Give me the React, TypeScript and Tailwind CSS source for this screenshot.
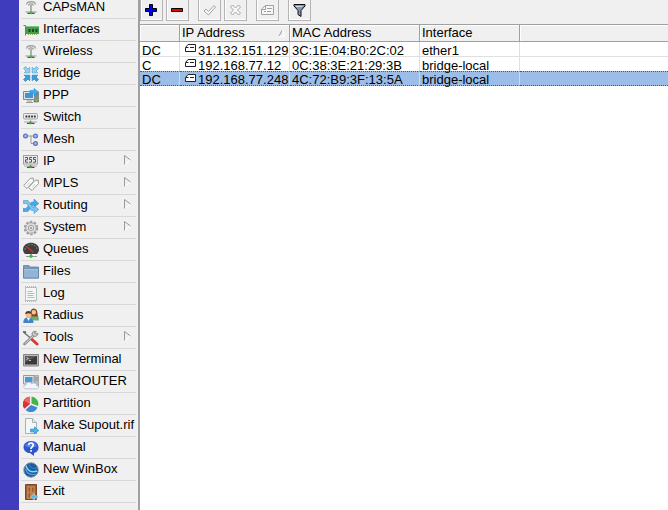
import React from "react";

type IconName =
  | "antenna" | "card" | "bridge" | "ppp" | "switch" | "mesh" | "ip" | "mpls" | "routing"
  | "gear" | "gauge" | "folder" | "log" | "users" | "tools" | "terminal" | "meta" | "pie"
  | "supout" | "help" | "winbox" | "door";

const glyphs: Record<IconName, React.ReactNode> = {
  antenna: (
    <g fill="none">
      <path d="M3.500 4.500C4 .8 12 .8 12.500 4.500" stroke="#a2a2a2" strokeWidth="1.300" />
      <path d="M5.500 5.500C6 3.200 10 3.200 10.500 5.500" stroke="#999" strokeWidth="1.200" />
      <path d="M8 5v7" stroke="#8a8a8a" strokeWidth="1.300" />
      <path d="M2.500 12h11" stroke="#b5b5b5" strokeWidth="1.500" />
      <path d="M4.500 13.300h7" stroke="#222" />
      <circle cx="8" cy="12.700" r="1.500" fill="#2fbe2f" />
    </g>
  ),
  card: (
    <g>
      <path d="M.5 3.500h2v10" stroke="#777" fill="none" />
      <path d="M3 4h13v8H3z" fill="#4a9b52" />
      <path d="M3 4.500h13" stroke="#7cc680" />
      <path d="M5.500 7h2v3h-2zM9 7h2v3H9zM12.500 7h2v3h-2z" fill="#1a4a22" />
      <path d="M5 12.500h9" stroke="#8fae5a" strokeDasharray="1 1" />
    </g>
  ),
  bridge: (
    <g strokeWidth=".6">
      <path d="M.5 2.500L2.500.5 5 3l1.800-1.800v5.600H1.200L3 5z" fill="#8fd2f4" stroke="#4e9bcb" />
      <path d="M15.500 2.500L13.500.5 11 3 9.200 1.200v5.600h5.600L13 5z" fill="#8fd2f4" stroke="#4e9bcb" />
      <path d="M.5 13.500l2 2L5 13l1.800 1.800V9.200H1.200L3 11z" fill="#35a0e2" stroke="#2273ad" />
      <path d="M15.500 13.500l-2 2L11 13l-1.800 1.800V9.200h5.600L13 11z" fill="#35a0e2" stroke="#2273ad" />
    </g>
  ),
  ppp: (
    <g>
      <path d="M11 4h4.500v10H11z" fill="#888" stroke="#666" strokeWidth=".6" />
      <path d="M.5 3.500h11v8H.5z" fill="#dfe3e6" stroke="#888" />
      <path d="M2 5h8v5H2z" fill="#3b96d6" />
      <path d="M4 13h5M3 14.500h7" stroke="#999" />
      <path d="M7 2.500h4V.5L15.500 4 11 7.500V5H7z" fill="#3aaef0" stroke="#1d7fc0" strokeWidth=".5" />
      <circle cx="13.500" cy="12" r="1" fill="#5de03c" />
    </g>
  ),
  switch: (
    <g>
      <rect x=".5" y="3.500" width="14" height="5.500" rx="1" fill="#ececec" stroke="#a5a5a5" />
      <path d="M2.500 6.500h10.500" stroke="#333" strokeWidth="1.800" strokeDasharray="1.800 1" />
      <path d="M7.500 9.500v3M1 12h13" stroke="#aaa" />
      <path d="M4 13.300h7.500" stroke="#222" />
      <circle cx="7.500" cy="12.700" r="1.500" fill="#2fae2f" />
    </g>
  ),
  mesh: (
    <g fill="none">
      <path d="M5 4h5M8 4v7.500h2.500" stroke="#999" />
      <g fill="#a9bdf5" stroke="#5470c8" strokeWidth="1.200">
        <circle cx="2.500" cy="4" r="1.900" />
        <circle cx="12.500" cy="4" r="1.900" />
        <circle cx="12.500" cy="11.500" r="1.900" />
      </g>
    </g>
  ),
  ip: (
    <g>
      <rect x=".5" y="1.500" width="14" height="8.500" fill="#e9e9e9" stroke="#a0a0a0" />
      <path d="M2 3.500h2.500v2.300H2.500v2.400H5M9 3.500H6.500v2h2v2.700H6M13 3.500h-2.500v2h2v2.700H10" fill="none" stroke="#555" />
      <path d="M7.500 10.500v2M1 12h13" stroke="#aaa" />
      <path d="M4 13.300h7.500" stroke="#222" />
      <circle cx="7.500" cy="12.700" r="1.500" fill="#2fae2f" />
    </g>
  ),
  mpls: (
    <g fill="#fafafa" stroke="#929292" strokeWidth=".9">
      <path d="M.8 9.500L7 2.500l3.200-.5.300 3.500L4 12.500z" />
      <path d="M5.500 11.500L12 4.500l3.200-.5.300 3.500L9 14.500z" />
      <path d="M4 9.500l3-3.300M9 11.500l3-3.300" stroke="#a9cfbc" />
    </g>
  ),
  routing: (
    <g stroke="#3787c2" strokeWidth=".5">
      <path d="M0 10.500h3l5.500-6.500H11V1l4.800 4.500L11 9.500V7H10l-5 6.500H0z" fill="#4aa8e6" />
      <path d="M.5 2.500H5l5 7h1V7.500l4.800 4-4.800 4v-3H8.500L3.500 5.500H.5z" fill="#7cc5f1" />
    </g>
  ),
  gear: (
    <g>
      <circle cx="8" cy="8" r="6.200" fill="none" stroke="#9c9c9c" strokeWidth="2" strokeDasharray="2.500 1.400" />
      <circle cx="8" cy="8" r="5.200" fill="#dcdcdc" stroke="#9c9c9c" strokeWidth=".7" />
      <circle cx="8" cy="8" r="2.600" fill="#eee" stroke="#8c8c8c" strokeWidth=".8" />
      <circle cx="8" cy="8" r="1" fill="#888" />
    </g>
  ),
  gauge: (
    <g>
      <path d="M0 7.500C0-1.500 16-1.500 16 7.500c0 1.700-.800 3.300-2 4.500H2C.800 10.800 0 9.200 0 7.500z" fill="#404040" />
      <path d="M2 7.500C2.500 1 13.500 1 14 7.500" fill="none" stroke="#aaa" strokeDasharray="1 2" />
      <path d="M3.500 4.500l7 6" stroke="#e02c2c" strokeWidth="1.200" />
      <path d="M3 14.500h11" stroke="#999" />
      <path d="M8 12v2" stroke="#777" />
      <circle cx="8" cy="14.200" r="1.700" fill="#2fc42f" />
    </g>
  ),
  folder: (
    <g stroke="#5d81a6" strokeWidth=".8">
      <path d="M.5 14V1.500h5.500l1 1.500h8.500v11z" fill="#7b9dc0" />
      <path d="M.5 4.500h15V14H.5z" fill="#93b4d4" />
      <path d="M1 5.300h14" stroke="#b9d0e6" />
    </g>
  ),
  log: (
    <g>
      <path d="M2.500 1.500h11v13h-11z" fill="#f4f7f5" stroke="#b4c2bc" />
      <path d="M2 .8h12M2 15.200h12" stroke="#9aa8a4" strokeDasharray="1 1" />
      <path d="M4.500 5.500h5M4.500 7.500h7M4.500 9.500h6M4.500 11.500h7" stroke="#a3c6bb" />
    </g>
  ),
  users: (
    <g>
      <path d="M7 8c0-2 1-3 3.500-3s5.300 2 5.300 6v1.500H8z" fill="#67b271" />
      <path d="M7.500 6C6.500-1 13.800-1 14.300 4l.5 4.500h-6z" fill="#894622" />
      <circle cx="10.800" cy="4.300" r="2.200" fill="#f3c796" />
      <path d="M.3 15c0-4 1.700-5.500 4.700-5.500S10.500 11 10.500 15z" fill="#3f85cb" />
      <path d="M4 10l1.500 3L7 10z" fill="#fff" />
      <circle cx="5.500" cy="6.500" r="3" fill="#f2bd85" />
      <path d="M2.300 6.200C1.800 2 9.200 2 8.700 6.200 7 4.700 4 5.200 2.300 6.200z" fill="#4a3526" />
    </g>
  ),
  tools: (
    <g fill="none" strokeLinecap="round">
      <path d="M1 2.500l7 6" stroke="#777" strokeWidth="1.600" />
      <path d="M.8 1.800l1.500.4" stroke="#666" strokeWidth="1.800" />
      <path d="M9 9.500l5 4.500" stroke="#d73a34" strokeWidth="3" />
      <path d="M1.500 14L11 5" stroke="#8a8a8a" strokeWidth="2.600" />
      <path d="M2 13.500L11 5" stroke="#ddd" />
      <path d="M13 1.500c-3-1-5.200 2-3.200 4s5.200 .5 5.200-2l-2.500.5-.8-1z" fill="#ccc" stroke="#888" />
    </g>
  ),
  terminal: (
    <g>
      <path d="M.5 2.500h15v11.500H.5z" fill="#bbb" stroke="#888" />
      <path d="M2 4h12v8.500H2z" fill="#3a3a3a" />
      <path d="M2 4h12L2 10.500z" fill="#5a5a5a" />
      <path d="M3.500 5.500l2 1-2 1M6 8.500h2" fill="none" stroke="#ddd" strokeWidth=".8" />
    </g>
  ),
  meta: (
    <g>
      <path d="M11 1.500h4.500v11H11z" fill="#bbb" stroke="#999" strokeWidth=".7" />
      <path d="M12 4h3M12 6h3" stroke="#777" strokeWidth=".6" />
      <path d="M.5 1.500h10.500v8.500H.5z" fill="#e3e6e9" stroke="#999" />
      <path d="M2 3h7.500v5.500H2z" fill="#4e98d0" />
      <path d="M3 14.800c-3 0-3-4 0-4 0-3 5-3.300 5.500-.8C11 8 14 9.500 13.500 11.500c3 0 3 3.300 0 3.300z" fill="#f4f6fb" stroke="#a9b4c4" strokeWidth=".7" />
    </g>
  ),
  pie: (
    <g>
      <path d="M7 8V.8a7.300 7.300 0 0 0-5.500 12z" fill="#d93434" />
      <path d="M7 8V.8A7.300 7.300 0 0 0 1.300 5z" fill="#ef6a60" />
      <path d="M8.500 7.500V.5a7.300 7.300 0 0 1 6.500 9.500z" fill="#43b548" />
      <path d="M8 9l6.500 2.500A7.300 7.300 0 0 1 2.500 14z" fill="#3f86d4" />
    </g>
  ),
  supout: (
    <g>
      <path d="M2.500.5h7l4 4v11h-11z" fill="#f3f7f7" stroke="#a3b5b8" />
      <path d="M9.500.5v4h4" fill="#dce5e8" stroke="#a3b5b8" />
      <path d="M7.500 11H11.500V8.800l4.300 3.700-4.300 3.500v-2h-4z" fill="#4bb3e8" stroke="#2b86bb" strokeWidth=".6" />
    </g>
  ),
  help: (
    <g>
      <path d="M8 1c9.500 0 9.500 11 3 12L11 16l-4-3C-2 12.500-1.500 1 8 1z" fill="#2e55cb" />
      <path d="M2 6C3 .8 13 .8 14 6 11 8 5 8 2 6z" fill="#5779de" />
      <path d="M5.700 5.200c0-3.200 5-2.700 4.500 0C10 7 8 7 8 9" fill="none" stroke="#fff" strokeWidth="1.600" />
      <path d="M7.200 10h1.700v1.700H7.200z" fill="#fff" />
    </g>
  ),
  winbox: (
    <g fill="none">
      <circle cx="8" cy="8" r="7.200" fill="#1c5a9f" stroke="#7d8ba0" />
      <path d="M3 3.500c1 5 5 7.500 11 5.500" stroke="#8bd4fa" strokeWidth="1.500" />
      <path d="M2.500 7c1.500 5 6 6.500 10.500 5" stroke="#4ba5e5" strokeWidth="1.300" />
      <path d="M6 2.500c1 3 4 4.500 8 3.500" stroke="#3479be" strokeWidth="1.300" />
    </g>
  ),
  door: (
    <g>
      <path d="M2.500.5h11v15h-11z" fill="#9c5c30" stroke="#7d4924" />
      <path d="M4 2h8v13H4z" fill="#c08050" />
      <path d="M5.500 3.500h1.500v4H5.500zM9 3.500h1.500v4H9zM5.500 9h1.500v4.500H5.500z" fill="#965a33" />
      <path d="M14.800 11.800h-3.500V9.500L7.500 13l3.800 3v-2h3.500z" fill="#4fb8ee" stroke="#cde9f8" strokeWidth=".5" />
    </g>
  ),
};

const menu: { label: string; icon: IconName; sub?: boolean }[] = [
  { label: "CAPsMAN", icon: "antenna" },
  { label: "Interfaces", icon: "card" },
  { label: "Wireless", icon: "antenna" },
  { label: "Bridge", icon: "bridge" },
  { label: "PPP", icon: "ppp" },
  { label: "Switch", icon: "switch" },
  { label: "Mesh", icon: "mesh" },
  { label: "IP", icon: "ip", sub: true },
  { label: "MPLS", icon: "mpls", sub: true },
  { label: "Routing", icon: "routing", sub: true },
  { label: "System", icon: "gear", sub: true },
  { label: "Queues", icon: "gauge" },
  { label: "Files", icon: "folder" },
  { label: "Log", icon: "log" },
  { label: "Radius", icon: "users" },
  { label: "Tools", icon: "tools", sub: true },
  { label: "New Terminal", icon: "terminal" },
  { label: "MetaROUTER", icon: "meta" },
  { label: "Partition", icon: "pie" },
  { label: "Make Supout.rif", icon: "supout" },
  { label: "Manual", icon: "help" },
  { label: "New WinBox", icon: "winbox" },
  { label: "Exit", icon: "door" },
];

const rows = [
  { flag: "DC", ip: "31.132.151.129", mac: "3C:1E:04:B0:2C:02", iface: "ether1", selected: false },
  { flag: "C", ip: "192.168.77.12", mac: "0C:38:3E:21:29:3B", iface: "bridge-local", selected: false },
  { flag: "DC", ip: "192.168.77.248", mac: "4C:72:B9:3F:13:5A", iface: "bridge-local", selected: true },
];

function ToolButton({ label, children }: { label: string; children: React.ReactNode }) {
  return (
    <button
      aria-label={label}
      className="flex h-[21px] w-[23px] items-center justify-center border border-t-0 border-[#b4b4b4] bg-[#f0f0f0] shadow-[inset_1px_-1px_0_#fff]"
    >
      <svg width="15" height="15" viewBox="0 0 15 15" fill="none">
        {children}
      </svg>
    </button>
  );
}

function Toolbar() {
  return (
    <div className="flex h-6 gap-[9px]">
      <div className="flex gap-[3px]">
        <ToolButton label="Add">
          <path d="M5.500 1.500h3v4h4v3h-4v4h-3v-4h-4v-3h4z" fill="#0000f5" stroke="#000" />
        </ToolButton>
        <ToolButton label="Remove">
          <path d="M1.500 5.500h11v3h-11z" fill="#f00000" stroke="#000" />
        </ToolButton>
      </div>
      <div className="flex gap-[3px]">
        <ToolButton label="Enable">
          <path d="M2 8l2-2 2.500 2.500L12 2.500l1.500 1.500L6.500 12z" fill="#f8f8f8" stroke="#a5a5a5" />
        </ToolButton>
        <ToolButton label="Disable">
          <path d="M2.500 4l2-2 3 3 3-3 2 2-3 3 3 3-2 2-3-3-3 3-2-2 3-3z" fill="#f8f8f8" stroke="#a5a5a5" />
        </ToolButton>
      </div>
      <ToolButton label="Comment">
        <path d="M1.500 11.500V6l4-3.500h8v9z" fill="#f5f5f5" stroke="#a0a0a0" />
        <path d="M1.500 6.500h4v-4M7 5.500h5M4 8.500h2M7 8.500h4" stroke="#a0a0a0" />
      </ToolButton>
      <ToolButton label="Filter">
        <path d="M2 1.500h11v1.500L9 7.500v6l-3-2v-4L2 3z" fill="#8397b5" stroke="#111" />
        <path d="M4 3.500h6" stroke="#d4def0" />
      </ToolButton>
    </div>
  );
}

const headCell = "h-[17px] border-r border-b border-[#a0a0a0] px-[2px] text-left font-normal shadow-[inset_1px_1px_0_#fff]";

function Cell({ children, selected }: { children?: React.ReactNode; selected: boolean }) {
  return (
    <td
      className={
        selected
          ? "border-y border-r border-y-[#555] border-r-[#d8d8d8] p-0 [border-bottom-style:dotted] [border-top-style:dotted]"
          : "border-r border-[#e0e0e0] p-0"
      }
    >
      <div className={selected ? "h-[13px] px-[2px] leading-4" : "h-[14px] px-[2px] leading-[18px]"}>
        {children}
      </div>
    </td>
  );
}

function AddressTable() {
  return (
    <table className="w-full table-fixed border-separate border-spacing-0 border-t border-[#a0a0a0] bg-white">
      <colgroup>
        <col className="w-[40px]" />
        <col className="w-[110px]" />
        <col className="w-[130px]" />
        <col className="w-[100px]" />
        <col />
      </colgroup>
      <thead className="bg-[#f0f0f0] leading-4">
        <tr>
          <th className={headCell} aria-label="Flags" />
          <th className={headCell}>
            <div className="flex items-center justify-between">
              IP Address
              <svg width="8" height="8" viewBox="0 0 8 8" fill="none" className="mr-px">
                <path d="M1 7L4.500 1" stroke="#999" />
                <path d="M4.500 1L7 7.500H1" stroke="#fff" />
              </svg>
            </div>
          </th>
          <th className={headCell}>MAC Address</th>
          <th className={headCell}>Interface</th>
          <th className="border-b border-[#a0a0a0] shadow-[inset_1px_1px_0_#fff]" aria-label="Spare" />
        </tr>
      </thead>
      <tbody>
        {rows.map((r, i) => (
          <tr
            key={r.ip}
            className={r.selected ? "bg-[#9cbde8]" : i === 0 ? "[&>td]:border-b [&>td]:border-b-[#e0e0e0]" : ""}
          >
            <Cell selected={r.selected}>{r.flag}</Cell>
            <Cell selected={r.selected}>
              <span className="flex gap-[2px] pl-[3px]">
                <svg width="11" height="9" viewBox="0 0 11 9" className="mt-[2px] shrink-0">
                  <path d="M.5 7.500V3.500l2.500-3h7.500v7z" fill="#fff" stroke="#222" />
                  <path d="M1 3.500h2.500M5 3.500h4" stroke="#222" />
                </svg>
                {r.ip}
              </span>
            </Cell>
            <Cell selected={r.selected}>{r.mac}</Cell>
            <Cell selected={r.selected}>{r.iface}</Cell>
            <td
              className={
                r.selected ? "border-y border-[#555] p-0 [border-bottom-style:dotted] [border-top-style:dotted]" : "p-0"
              }
            />
          </tr>
        ))}
      </tbody>
    </table>
  );
}

export default function App() {
  return (
    <div className="flex h-screen overflow-hidden bg-[#f0f0f0] font-['Liberation_Sans',Arial,sans-serif] text-[13px] text-black">
      <div className="w-[19px] shrink-0 bg-[#3f3dbe]" />
      <nav className="w-[121px] shrink-0 overflow-hidden border-r-2 border-[#a0a0a0] px-[2px]">
        <ul className="-mt-[3px]">
          {menu.map((m) => (
            <li key={m.label} className="border-b border-[#d8d8d8]">
              <button className="flex h-[21px] w-full items-start gap-1 pt-px pl-[2px] text-left leading-[18px] whitespace-nowrap">
                <svg width="16" height="16" viewBox="0 0 16 16" className="mt-[2px] shrink-0">
                  {glyphs[m.icon]}
                </svg>
                {m.label}
                {m.sub && (
                  <svg width="7" height="10" viewBox="0 0 7 10" fill="none" className="mt-[3px] mr-[5px] ml-auto">
                    <path d="M.5 9.500L6.500 5" stroke="#fff" />
                    <path d="M.5 9.500V.5L6.500 5" stroke="#999" />
                  </svg>
                )}
              </button>
            </li>
          ))}
        </ul>
      </nav>
      <main className="flex min-w-0 flex-1 flex-col">
        <Toolbar />
        <div className="flex-1 bg-white">
          <AddressTable />
        </div>
      </main>
    </div>
  );
}
